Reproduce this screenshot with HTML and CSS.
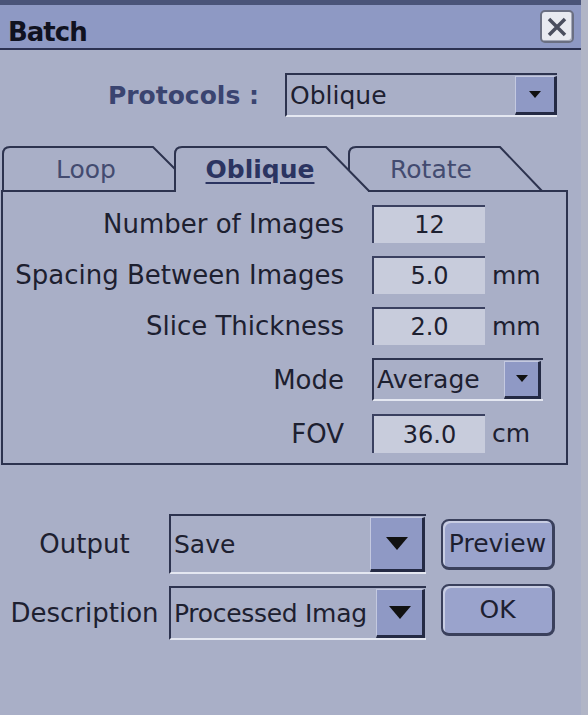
FILE: index.html
```html
<!DOCTYPE html>
<html lang="en">
<head>
    <meta charset="UTF-8">
    <meta name="viewport" content="width=device-width, initial-scale=1.0">
    <title>Batch</title>
    <link rel="stylesheet" href="styles.css">
</head>
<body>
    <div class="window">
        <header class="titlebar">
            <span class="title">Batch</span>
            <span class="close">
                <svg width="22" height="22" viewBox="0 0 22 22">
                    <path d="M3,3 L19,19 M19,3 L3,19" stroke="#4a4e5e" stroke-width="3.5" fill="none"/>
                </svg>
            </span>
        </header>

        <div class="protocol-row">
            <span class="protocol-label">Protocols :</span>
            <div class="combo combo-protocol">
                <span class="combo-text">Oblique</span>
                <span class="combo-arrow">
                    <svg width="12" height="8" viewBox="0 0 12 8"><polygon points="0,0 12,0 6,7" fill="#111"/></svg>
                </span>
            </div>
        </div>

        <div class="tabstrip">
            <svg class="tab-shapes" width="581" height="48" viewBox="0 0 581 48">
                <path d="M3,48 V10 Q3,3 10,3 H153 L198,48" fill="#a9afc7" stroke="#2d334f" stroke-width="2"/>
                <path d="M349,48 V10 Q349,3 356,3 H500 L542,47" fill="#a9afc7" stroke="#2d334f" stroke-width="2"/>
                <path d="M1,47 H177 M368,47 H568" stroke="#2d334f" stroke-width="2" fill="none"/>
                <path d="M175,48 V10 Q175,3 182,3 H326 L369,47 V48" fill="#a9afc7" stroke="#2d334f" stroke-width="2"/>
            </svg>
            <div class="tab-labels">
                <span class="tab tab-loop">Loop</span>
                <span class="tab tab-oblique tab-active">Oblique</span>
                <span class="tab tab-rotate">Rotate</span>
            </div>
        </div>

        <div class="panel">
            <div class="field-row">
                <span class="field-label">Number of Images</span>
                <span class="field">12</span>
            </div>
            <div class="field-row">
                <span class="field-label">Spacing Between Images</span>
                <span class="field">5.0</span>
                <span class="unit">mm</span>
            </div>
            <div class="field-row">
                <span class="field-label">Slice Thickness</span>
                <span class="field">2.0</span>
                <span class="unit">mm</span>
            </div>
            <div class="field-row row-mode">
                <span class="field-label">Mode</span>
                <div class="combo combo-mode">
                    <span class="combo-text">Average</span>
                    <span class="combo-arrow">
                        <svg width="12" height="8" viewBox="0 0 12 8"><polygon points="0,0 12,0 6,7" fill="#111"/></svg>
                    </span>
                </div>
            </div>
            <div class="field-row row-fov">
                <span class="field-label">FOV</span>
                <span class="field">36.0</span>
                <span class="unit">cm</span>
            </div>
        </div>

        <div class="bottom">
            <div class="bottom-row">
                <span class="bottom-label">Output</span>
                <div class="combo combo-output">
                    <span class="combo-text">Save</span>
                    <span class="combo-arrow">
                        <svg width="22" height="13" viewBox="0 0 22 13"><polygon points="0,0 22,0 11,13" fill="#111"/></svg>
                    </span>
                </div>
                <button class="btn btn-preview">Preview</button>
            </div>
            <div class="bottom-row">
                <span class="bottom-label">Description</span>
                <div class="combo combo-desc">
                    <span class="combo-text combo-text-tight">Processed Imag</span>
                    <span class="combo-arrow">
                        <svg width="22" height="13" viewBox="0 0 22 13"><polygon points="0,0 22,0 11,13" fill="#111"/></svg>
                    </span>
                </div>
                <button class="btn btn-ok">OK</button>
            </div>
        </div>
    </div>
</body>
</html>
```

FILE: styles.css
```css
body {
    margin: 0;
    background-color: #a9afc7;
    font-family: 'DejaVu Sans', sans-serif;
    color: #1d2030;
}
.window {
    width: 581px;
    height: 715px;
    border-right: 7px solid #b1b5c6;
    display: flex;
    flex-direction: column;
}
.titlebar {
    height: 43px;
    background-color: #8e99c4;
    border-top: 5px solid #4a5479;
    border-bottom: 2px solid #2c3252;
    display: flex;
    justify-content: space-between;
    align-items: flex-start;
}
.title {
    margin: 12px 0 0 8px;
    font-size: 26px;
    font-weight: bold;
    letter-spacing: -1px;
    line-height: 30px;
    color: #101220;
}
.close {
    margin: 5px 7px 0 0;
    width: 34px;
    height: 33px;
    box-sizing: border-box;
    background-color: #e8eaf0;
    border: 2px solid #6a6f82;
    border-radius: 5px;
    box-shadow: inset -1px -1px 0 #a4a8b8;
    display: flex;
    align-items: center;
    justify-content: center;
}
.protocol-row {
    display: flex;
    justify-content: flex-end;
    align-items: center;
    margin-top: 23px;
    padding-right: 24px;
}
.protocol-label {
    font-weight: bold;
    font-size: 25px;
    color: #3a4470;
    margin-right: 26px;
}
.combo {
    box-sizing: border-box;
    display: flex;
    border-top: 2px solid #2d334f;
    border-left: 2px solid #2d334f;
    border-bottom: 2px solid #e4e7f1;
    background-color: #a9afc7;
}
.combo-text {
    flex: 1;
    overflow: hidden;
    white-space: nowrap;
    display: flex;
    align-items: center;
    padding-left: 3px;
    font-size: 25px;
    color: #1d2030;
}
.combo-text-tight {
    letter-spacing: -0.3px;
}
.combo-arrow {
    box-sizing: border-box;
    background-color: #8f99c5;
    border-top: 1px solid #c4c9e0;
    border-left: 1px solid #c4c9e0;
    border-right: 3px solid #242a44;
    border-bottom: 3px solid #242a44;
    display: flex;
    align-items: center;
    justify-content: center;
    margin-top: 1px;
}
.combo-protocol {
    width: 272px;
    height: 44px;
}
.combo-protocol .combo-arrow {
    width: 42px;
}
.tabstrip {
    display: grid;
    margin-top: 27px;
}
.tab-shapes,
.tab-labels {
    grid-area: 1 / 1;
}
.tab-labels {
    display: flex;
    height: 48px;
    box-sizing: border-box;
    padding-top: 11px;
    font-size: 25px;
    line-height: 30px;
}
.tab {
    text-align: center;
    color: #434b70;
}
.tab-loop {
    margin-left: 4px;
    width: 164px;
}
.tab-oblique {
    margin-left: 7px;
    width: 170px;
}
.tab-rotate {
    margin-left: 3px;
    width: 166px;
}
.tab-active {
    font-weight: bold;
    color: #2b3461;
    text-decoration: underline;
    text-decoration-thickness: 2px;
    text-underline-offset: 4px;
}
.panel {
    margin-left: 1px;
    width: 567px;
    box-sizing: border-box;
    border: 2px solid #2d334f;
    border-top: none;
    padding: 13px 0 10px;
    display: flex;
    flex-direction: column;
    gap: 13px;
}
.field-row {
    display: flex;
    align-items: center;
    height: 38px;
}
.row-mode {
    height: 43px;
}
.row-fov {
    height: 39px;
}
.field-label {
    width: 341px;
    text-align: right;
    font-size: 26px;
}
.field {
    margin-left: 28px;
    width: 113px;
    height: 100%;
    box-sizing: border-box;
    background-color: #c8ccdc;
    border-top: 2px solid #3a4060;
    border-left: 2px solid #3a4060;
    display: flex;
    align-items: center;
    justify-content: center;
    font-size: 24px;
}
.unit {
    margin-left: 7px;
    font-size: 25px;
}
.combo-mode {
    margin-left: 28px;
    width: 171px;
    height: 43px;
}
.combo-mode .combo-arrow {
    width: 37px;
    margin-right: 2px;
}
.bottom {
    margin-top: 49px;
    display: flex;
    flex-direction: column;
    gap: 12px;
}
.bottom-row {
    display: flex;
    align-items: center;
}
.bottom-label {
    width: 169px;
    text-align: center;
    font-size: 26px;
}
.combo-output {
    width: 257px;
    height: 60px;
}
.combo-output .combo-arrow {
    width: 55px;
    margin-right: 1px;
}
.combo-desc {
    width: 257px;
    height: 54px;
}
.combo-desc .combo-arrow {
    width: 49px;
    margin-right: 1px;
}
.btn {
    margin-left: 15px;
    width: 114px;
    box-sizing: border-box;
    background-color: #9aa3cc;
    border: 2px solid #3a405c;
    border-right-width: 3px;
    border-bottom-width: 3px;
    border-radius: 8px;
    box-shadow: inset 2px 2px 0 #c8cde3;
    font-family: 'DejaVu Sans', sans-serif;
    font-size: 25px;
    color: #1d2030;
    padding: 0;
}
.btn-preview {
    height: 51px;
}
.btn-ok {
    height: 52px;
    margin-top: -6px;
}
```
